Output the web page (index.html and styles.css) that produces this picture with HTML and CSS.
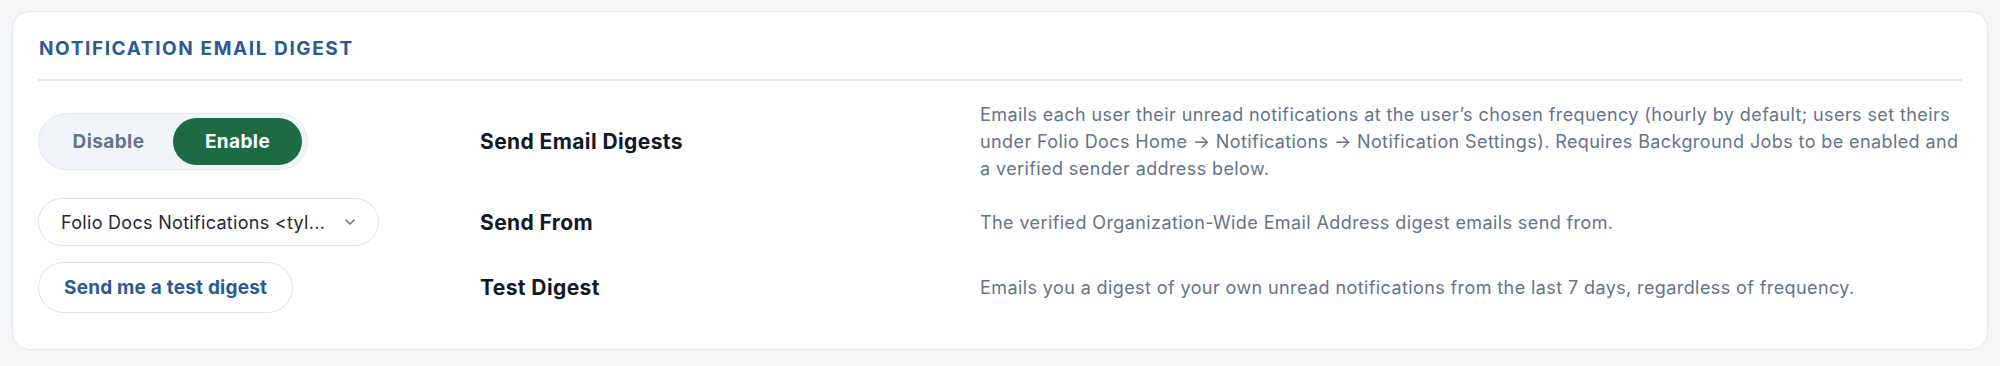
FILE: index.html
```html
<!DOCTYPE html>
<html lang="en">
  <head>
    <meta charset="UTF-8" />
    <meta name="viewport" content="width=device-width, initial-scale=1.0" />
    <title>Notification Email Digest</title>
    <link rel="stylesheet" href="styles.css">
  </head>
  <body>
    <section class="card">
      <h2 class="card-title">Notification Email Digest</h2>

      <div class="settings">
        <div class="control">
          <div class="toggle">
            <button class="toggle-btn">Disable</button>
            <button class="toggle-btn toggle-active">Enable</button>
          </div>
        </div>
        <div class="label">Send Email Digests</div>
        <p class="desc">
          Emails each user their unread notifications at the user’s chosen
          frequency (hourly by default; users set theirs under Folio Docs Home
          → Notifications → Notification Settings). Requires Background Jobs to
          be enabled and a verified sender address below.
        </p>

        <div class="control">
          <div class="select">
            <span class="select-text">Folio Docs Notifications &lt;tyl...</span>
            <svg class="chevron" width="12" height="8" viewBox="0 0 12 8">
              <path d="M2 2l4 4 4-4" fill="none" stroke="#64748b" stroke-width="1.6" stroke-linecap="round" stroke-linejoin="round" />
            </svg>
          </div>
        </div>
        <div class="label">Send From</div>
        <p class="desc">
          The verified Organization-Wide Email Address digest emails send from.
        </p>

        <div class="control">
          <button class="test-btn">Send me a test digest</button>
        </div>
        <div class="label">Test Digest</div>
        <p class="desc">
          Emails you a digest of your own unread notifications from the last 7
          days, regardless of frequency.
        </p>
      </div>
    </section>
  </body>
</html>
```

FILE: styles.css
```css
* {
  margin: 0;
  padding: 0;
  box-sizing: border-box;
  font-family: Inter, "Noto Sans", sans-serif;
}

body {
  background-color: #f5f6f8;
  padding: 11px 12px;
}

.card {
  background-color: white;
  border: 1px solid #e3e7ee;
  border-radius: 18px;
  padding: 25px 25px 36px;
}

.card-title {
  font-size: 19px;
  font-weight: 700;
  letter-spacing: 1.6px;
  text-transform: uppercase;
  color: #2b5a94;
  line-height: 24px;
  padding-left: 1px;
  padding-bottom: 18px;
  border-bottom: 2px solid #e2e8f2;
}

.settings {
  display: grid;
  grid-template-columns: 442px 500px 1fr;
  align-items: center;
  row-gap: 16px;
  margin-top: 20px;
}

.control {
  display: flex;
}

.label {
  font-size: 21px;
  font-weight: 700;
  letter-spacing: 0.4px;
  color: #111827;
}

.desc {
  font-size: 18px;
  letter-spacing: 0.4px;
  line-height: 27px;
  color: #64748b;
}

.toggle {
  display: flex;
  padding: 4px 5px;
  background-color: #f1f5f9;
  border: 1px solid #e2e8f0;
  border-radius: 30px;
}

.toggle-btn {
  width: 129px;
  height: 47px;
  border: none;
  border-radius: 24px;
  background: none;
  font-size: 19px;
  font-weight: 700;
  letter-spacing: 0.4px;
  color: #64748b;
  cursor: pointer;
}

.toggle-active {
  background-color: #1d6b44;
  color: white;
}

.select {
  display: flex;
  align-items: center;
  justify-content: space-between;
  width: 341px;
  height: 48px;
  padding: 0 22px;
  border: 1px solid #dde3ec;
  border-radius: 24px;
  background-color: white;
}

.select-text {
  font-size: 18px;
  letter-spacing: 0.3px;
  color: #1f2937;
}

.test-btn {
  height: 51px;
  padding: 0 25px;
  border: 1px solid #dde3ec;
  border-radius: 26px;
  background-color: white;
  font-size: 19px;
  font-weight: 700;
  letter-spacing: 0.2px;
  color: #2b5a94;
  cursor: pointer;
}
```
